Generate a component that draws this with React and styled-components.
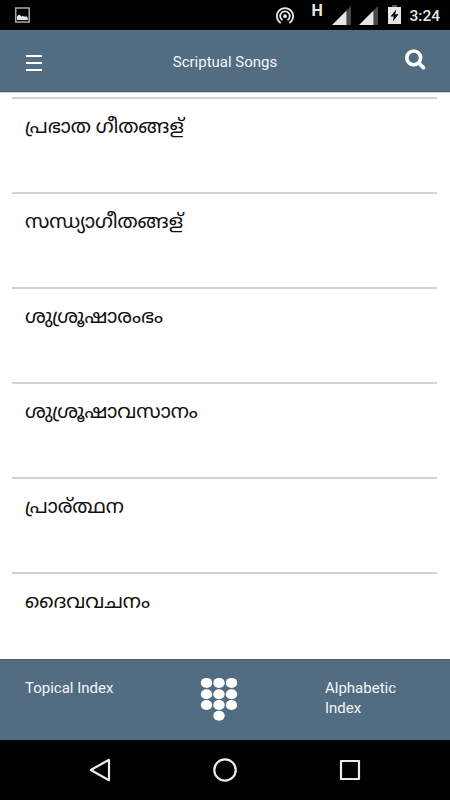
import React from "react";
import styled, { createGlobalStyle } from "styled-components";

const GlobalStyle = createGlobalStyle`
  * {
    box-sizing: border-box;
  }
  body {
    margin: 0;
    background: #fff;
  }
`;

const Screen = styled.div`
  display: flex;
  flex-direction: column;
  width: 450px;
  height: 800px;
  overflow: hidden;
  background: #fff;
  font-family: Roboto, sans-serif;
`;

const StatusBar = styled.div`
  display: flex;
  flex: none;
  justify-content: space-between;
  height: 30px;
  padding: 0 10px 0 14px;
  background: #000;
`;

const StatusIcons = styled.div`
  display: flex;
  align-items: flex-start;
`;

const StatusIcon = styled.svg`
  display: block;
  width: ${props => props.$w}px;
  height: ${props => props.$h}px;
  margin: ${props => props.$top}px ${props => props.$gap || 0}px 0 0;
`;

const NetworkType = styled.span`
  width: 21px;
  color: #e6e6e6;
  font-size: 16px;
  font-weight: 700;
  line-height: 22px;
`;

const Clock = styled.span`
  color: #e6e6e6;
  font-size: 15.5px;
  font-weight: 500;
  line-height: 32px;
`;

const Header = styled.header`
  display: grid;
  flex: none;
  grid-template-columns: 1fr auto 1fr;
  height: 62px;
  padding: 0 24px 0 26px;
  background: #526c82;
  border-bottom: 1px solid #456079;
`;

const MenuButton = styled.button`
  display: flex;
  flex-direction: column;
  gap: 5px;
  width: 16px;
  height: 16px;
  margin-top: 25px;
  padding: 0;
  border: none;
  background: transparent;
`;

const MenuLine = styled.span`
  height: 2px;
  width: 16px;
  flex: none;
  background: #fff;
`;

const Title = styled.h1`
  margin: 0 2px 0 0;
  color: #f4f6f8;
  font-size: 15px;
  font-weight: 400;
  line-height: 65px;
`;

const SearchButton = styled.button`
  justify-self: end;
  width: 21px;
  height: 21px;
  margin-top: 19px;
  padding: 0;
  border: none;
  background: transparent;
`;

const SongList = styled.ul`
  flex: 1;
  margin: 0;
  padding: 4px 13px 0 12px;
  border-top: 1px solid #d0d8df;
  overflow: hidden;
  list-style: none;
`;

const SongRow = styled.li`
  height: 95px;
  padding: 13px 13px 0;
  border-top: 2px solid #d3d3d3;
  color: #111;
  font-family: Roboto, "Noto Sans Malayalam", "Noto Sans", sans-serif;
  font-size: 19.9px;
  line-height: 30px;
`;

const Footer = styled.footer`
  display: grid;
  flex: none;
  grid-template-columns: 175px 125px 90px;
  height: 81px;
  padding: 18px 25px 0;
  background: #526c82;
  border-top: 1px solid #456079;
`;

const IndexLink = styled.span`
  color: #f4f6f8;
  font-size: 15px;
  line-height: 20px;
`;

const KeypadIcon = styled.svg`
  display: block;
  width: 38px;
  height: 45px;
`;

const NavBar = styled.nav`
  display: flex;
  flex: none;
  align-items: center;
  justify-content: center;
  gap: 101px;
  height: 60px;
  background: #000;
`;

const NavIcon = styled.svg`
  display: block;
  width: 24px;
  height: 24px;
  fill: none;
  stroke: #ebebeb;
  stroke-width: 2.2;
`;

const songs = [
  "പ്രഭാത ഗീതങ്ങള്",
  "സന്ധ്യാഗീതങ്ങള്",
  "ശുശ്രൂഷാരംഭം",
  "ശുശ്രൂഷാവസാനം",
  "പ്രാര്ത്ഥന",
  "ദൈവവചനം"
];

const keys = [
  [6.5, 4.9], [19, 4.9], [31.5, 4.9],
  [6.5, 16.2], [19, 16.2], [31.5, 16.2],
  [6.5, 27], [19, 27], [31.5, 27],
  [19, 37.7]
];

const Signal = ({ gap }) => (
  <StatusIcon $w={19} $h={19} $top={6} $gap={gap} viewBox="0 0 19 19">
    <path d="M14.5 4.5 19 0v19h-4.5z" fill="#484848" />
    <path d="M0 19 14.5 4.5V19z" fill="#e6e6e6" />
  </StatusIcon>
);

const Status = () => (
  <StatusBar>
    <StatusIcon $w={16} $h={16} $top={7} viewBox="0 0 16 16">
      <rect x="1.7" y="1" width="13.5" height="14" fill="none" stroke="#aaa" strokeWidth="1.5" />
      <path d="M3 13V9.2l1.8-1.5 1.2.2 1.5 1.8 1.3-.9 1.2.6h3l.8 2.1V13z" fill="#e6e6e6" />
    </StatusIcon>
    <StatusIcons>
      <StatusIcon $w={18} $h={18} $top={7} $gap={17} viewBox="0 0 18 18" fill="none" stroke="#e6e6e6">
        <path d="M4.7 16.1a8.1 8.1 0 1 1 8.6 0" strokeWidth="1.8" />
        <path d="M6.5 13.2a4.8 4.8 0 1 1 5 0" strokeWidth="1.8" />
        <circle cx="9" cy="9.2" r="1.9" fill="#e6e6e6" stroke="none" />
      </StatusIcon>
      <NetworkType>H</NetworkType>
      <Signal gap={8} />
      <Signal gap={10} />
      <StatusIcon $w={13} $h={19} $top={5} $gap={8} viewBox="0 0 13 19">
        <path d="M4 0h5v2H4z" fill="#555" />
        <path d="M0 2h13v17H0z" fill="#e6e6e6" />
        <path d="m8.2 4.5-5.7 7h3.3l-1 5 5.8-7.2H7.2z" fill="#000" />
      </StatusIcon>
      <Clock>3:24</Clock>
    </StatusIcons>
  </StatusBar>
);

export default class App extends React.Component {
  render() {
    return (
      <>
        <GlobalStyle />
        <Screen>
          <Status />
          <Header>
            <MenuButton aria-label="Menu">
              <MenuLine />
              <MenuLine />
              <MenuLine />
            </MenuButton>
            <Title>Scriptual Songs</Title>
            <SearchButton aria-label="Search">
              <svg width="21" height="21" viewBox="0 0 21 21" fill="none" stroke="#fff" display="block">
                <circle cx="8.7" cy="8.9" r="6.9" strokeWidth="3.6" />
                <path d="m14 14.2 4.4 4.4" strokeWidth="3.7" strokeLinecap="round" />
              </svg>
            </SearchButton>
          </Header>
          <SongList>
            {songs.map(song => (
              <SongRow key={song} lang="ml">{song}</SongRow>
            ))}
          </SongList>
          <Footer>
            <IndexLink>Topical Index</IndexLink>
            <KeypadIcon viewBox="0 0 38 45">
              {keys.map(([x, y]) => (
                <ellipse key={`${x}-${y}`} cx={x} cy={y} rx="5.7" ry="5" fill="#fff" />
              ))}
            </KeypadIcon>
            <IndexLink>Alphabetic Index</IndexLink>
          </Footer>
          <NavBar>
            <NavIcon viewBox="0 0 24 24">
              <path d="M2.8 12 21 1.8v20.4z" strokeLinejoin="round" />
            </NavIcon>
            <NavIcon viewBox="0 0 24 24">
              <circle cx="12" cy="12" r="10.7" />
            </NavIcon>
            <NavIcon viewBox="0 0 24 24">
              <rect x="3" y="3" width="18" height="18" strokeLinejoin="round" />
            </NavIcon>
          </NavBar>
        </Screen>
      </>
    );
  }
}
